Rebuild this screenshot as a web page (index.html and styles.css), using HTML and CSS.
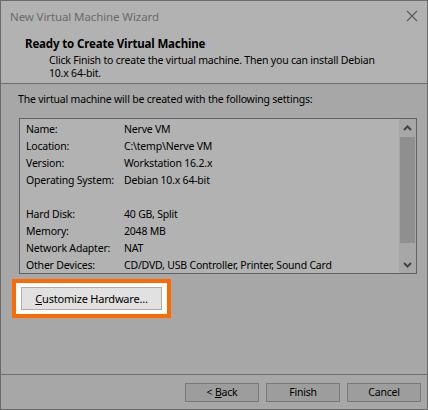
FILE: index.html
```html
<!DOCTYPE html>
<html>
<head>
<meta charset="utf-8">
<link rel="stylesheet" href="styles.css">
</head>
<body>
<div class="window">
  <div class="titlebar">
    <span class="title">New Virtual Machine Wizard</span>
    <svg class="close" width="12" height="12" viewBox="0 0 12 12"><path d="M1 1 L11 11 M11 1 L1 11" stroke="#808080" stroke-width="1.1" fill="none"/></svg>
  </div>
  <div class="header">
    <div class="h-title">Ready to Create Virtual Machine</div>
    <div class="h-sub">Click Finish to create the virtual machine. Then you can install Debian<br>10.x 64-bit.</div>
  </div>
  <div class="body">
    <p class="intro">The virtual machine will be created with the following settings:</p>
    <div class="listbox">
      <div class="list">
        <span>Name:</span><span>Nerve VM</span>
        <span>Location:</span><span>C:\temp\Nerve VM</span>
        <span>Version:</span><span>Workstation 16.2.x</span>
        <span>Operating System:</span><span>Debian 10.x 64-bit</span>
        <span>&nbsp;</span><span>&nbsp;</span>
        <span>Hard Disk:</span><span>40 GB, Split</span>
        <span>Memory:</span><span>2048 MB</span>
        <span>Network Adapter:</span><span>NAT</span>
        <span>Other Devices:</span><span>CD/DVD, USB Controller, Printer, Sound Card</span>
      </div>
      <div class="scrollbar">
        <div class="arrow"><svg width="9" height="6" viewBox="0 0 9 6"><path d="M1 5 L4.5 1.5 L8 5" stroke="#606060" stroke-width="2" fill="none"/></svg></div>
        <div class="track"><div class="thumb"></div></div>
        <div class="arrow"><svg width="9" height="6" viewBox="0 0 9 6"><path d="M1 1 L4.5 4.5 L8 1" stroke="#606060" stroke-width="2" fill="none"/></svg></div>
      </div>
    </div>
    <div class="highlight">
      <button class="btn custom"><u>C</u>ustomize Hardware...</button>
    </div>
  </div>
  <div class="footer">
    <button class="btn nav">&lt; <u>B</u>ack</button>
    <button class="btn nav">Finish</button>
    <button class="btn nav">Cancel</button>
  </div>
  <div class="dim"></div>
</div>
</body>
</html>
```

FILE: styles.css
```css
* { box-sizing: border-box; }
html, body { margin: 0; padding: 0; }
body {
  width: 428px;
  height: 410px;
  overflow: hidden;
  font-family: "Noto Sans", "Open Sans", sans-serif;
  font-size: 10.5px;
  letter-spacing: -0.2px;
  color: #000;
  background: #fff;
}
.window {
  position: relative;
  width: 428px;
  height: 410px;
  border: 1px solid #9a9a9a;
  background: #f0f0f0;
  display: flex;
  flex-direction: column;
}
.titlebar {
  height: 30px;
  background: #fff;
  display: flex;
  align-items: center;
  justify-content: space-between;
  padding: 0 9px 0 9px;
}
.title { color: #999; font-size: 11.5px; letter-spacing: -0.1px; }
.header {
  height: 53px;
  background: #fff;
  border-bottom: 1px solid #a0a0a0;
  padding: 6px 0 0 24px;
}
.h-title { font-weight: bold; line-height: 14px; font-size: 11.5px; letter-spacing: -0.15px; }
.h-sub { margin: 3px 0 0 24px; line-height: 13px; }
.body {
  height: 290px;
  padding: 8px 0 0 17px;
  display: flex;
  flex-direction: column;
  align-items: flex-start;
}
.intro { margin: 0; line-height: 14px; }
.listbox {
  margin: 12px 0 0 1px;
  width: 398px;
  height: 156px;
  border: 1px solid #8a8a93;
  background: #fff;
  display: flex;
  overflow: hidden;
}
.list {
  flex: 1;
  display: grid;
  grid-template-columns: 98px 1fr;
  grid-auto-rows: 17px;
  line-height: 17px;
  padding: 2px 0 0 6px;
  white-space: nowrap;
}
.scrollbar {
  width: 17px;
  background: #f0f0f0;
  display: flex;
  flex-direction: column;
}
.arrow {
  height: 17px;
  display: flex;
  align-items: center;
  justify-content: center;
}
.track { flex: 1; }
.thumb { height: 106px; margin: 1px 1px 0 1px; background: #cdcdcd; }
.highlight {
  position: relative;
  z-index: 2;
  margin: 5px 0 0 -6px;
  border: 4px solid #ff6a00;
  background: #fff;
  padding: 4px 5px 4px 5px;
}
.btn {
  font-family: inherit;
  font-size: 10.5px;
  letter-spacing: -0.2px;
  color: #000;
  background: #e1e1e1;
  border: 1px solid #adadad;
  padding: 0;
  margin: 0;
}
.custom { width: 141px; height: 23px; font-size: 11px; }
.footer {
  flex: 1;
  border-top: 1px solid #a0a0a0;
  display: flex;
  justify-content: flex-end;
  gap: 7px;
  padding: 8px 6px 0 0;
}
.nav { width: 74px; height: 19px; line-height: 17px; }
.dim {
  position: absolute;
  inset: -1px;
  background: rgba(0, 0, 0, 0.3);
  z-index: 1;
}
```
